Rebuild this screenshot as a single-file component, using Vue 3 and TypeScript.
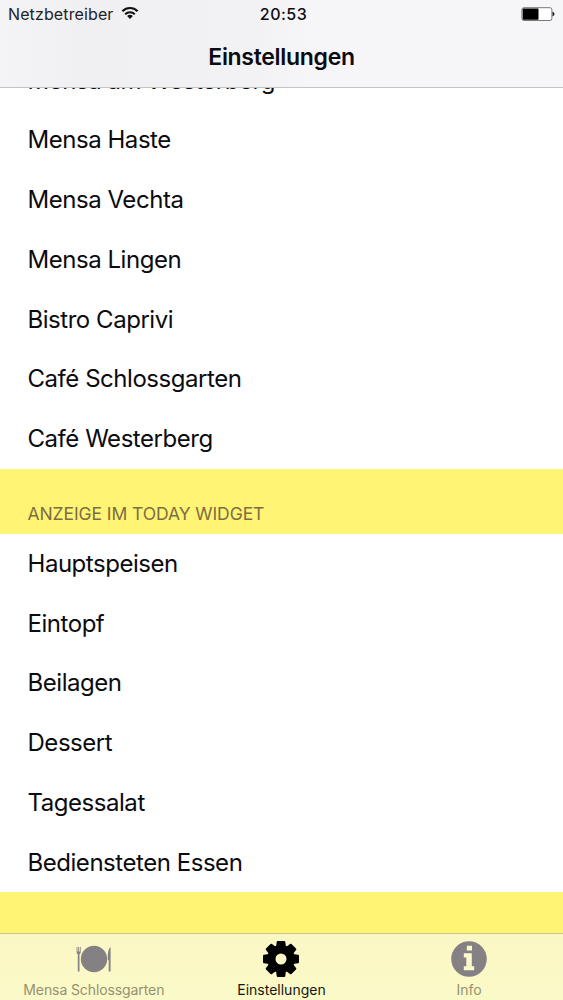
<script setup lang="ts">
const canteens: string[] = [
  'Mensa am Westerberg',
  'Mensa Haste',
  'Mensa Vechta',
  'Mensa Lingen',
  'Bistro Caprivi',
  'Café Schlossgarten',
  'Café Westerberg',
]
const categories: string[] = [
  'Hauptspeisen',
  'Eintopf',
  'Beilagen',
  'Dessert',
  'Tagessalat',
  'Bediensteten Essen',
]
const teeth: number[] = [0, 45, 90, 135, 180, 225, 270, 315]
</script>

<template>
  <div class="screen">
    <header class="top">
      <div class="status">
        <div class="carrier">
          <span>Netzbetreiber</span>
          <svg class="wifi" viewBox="0 0 18 14" width="18" height="14">
            <g fill="none" stroke="#111" stroke-width="2.1">
              <path d="M1.4 5.2a10.8 10.8 0 0 1 15.2 0" />
              <path d="M4.2 8.2a6.8 6.8 0 0 1 9.6 0" />
            </g>
            <path d="M9 13L6.1 10.1a4.1 4.1 0 0 1 5.8 0z" fill="#111" />
          </svg>
        </div>
        <div class="clock">20:53</div>
        <svg class="battery" viewBox="0 0 34 14" width="34" height="14">
          <rect x=".9" y=".7" width="30" height="12.8" rx="2" fill="#fff" stroke="#77777a" />
          <rect x="1.7" y="1.5" width="15.8" height="11.2" rx=".6" fill="#000" />
          <path d="M31.5 4.8q2 .4 2 2.2t-2 2.2z" fill="#222" />
        </svg>
      </div>
      <h1 class="title">Einstellungen</h1>
    </header>

    <main class="content">
      <ul class="list first">
        <li v-for="name in canteens" :key="name" class="row">{{ name }}</li>
      </ul>
      <h2 class="section">ANZEIGE IM TODAY WIDGET</h2>
      <ul class="list">
        <li v-for="name in categories" :key="name" class="row">{{ name }}</li>
      </ul>
    </main>

    <nav class="tabs">
      <div class="tab">
        <svg viewBox="0 0 36 38" width="36" height="38">
          <g fill="#858083">
            <circle cx="18" cy="19" r="13.2" />
            <path d="M.6 7h.8v4.500h.8V7h.9v4.500h.8V7h.8v5.200q0 1.600-1.200 2.100V31.500H1.800V14.300Q.6 13.800.6 12.200z" />
            <path d="M34.600 7V31.500h-1.900V20.500q-1-.5-1-2.500 0-9 2.900-11z" />
          </g>
        </svg>
        <span class="label mensa">Mensa Schlossgarten</span>
      </div>
      <div class="tab active">
        <svg viewBox="-19 -19 38 38" width="38" height="38">
          <path
            v-for="angle in teeth"
            :key="angle"
            d="M-5.200-10L-4.300-17q.1-1 1.100-1h6.400q1 0 1.100 1L5.200-10z"
            :transform="`rotate(${angle})`"
          />
          <circle r="9.700" fill="none" stroke="#000" stroke-width="8.400" />
        </svg>
        <span class="label">Einstellungen</span>
      </div>
      <div class="tab">
        <svg class="info" viewBox="0 0 38 38" width="38" height="38">
          <circle cx="19" cy="19" r="17.800" fill="#858083" />
          <path d="M16.800 5.800h5.200v4.800h-5.200zM13.800 13.300h8v12.900h2.400v4H13.800v-4h2.500v-8.800h-2.500z" fill="#fbf9c9" />
        </svg>
        <span class="label">Info</span>
      </div>
    </nav>
  </div>
</template>

<style>
body {
  margin: 0;
}
</style>

<style scoped>
.screen {
  width: 563px;
  height: 1000px;
  display: flex;
  flex-direction: column;
  overflow: hidden;
  background: #fff474;
  color: #0b0b10;
  font-family: Inter, "Liberation Sans", sans-serif;
}
.top {
  box-sizing: border-box;
  height: 87.5px;
  flex: none;
  border-bottom: 1px solid #c4c3c6;
  background: linear-gradient(90deg, #f4f3f6 0, #f0eff2 15%, #f2f1f4 45%, #f6f5f8 55%, #f6f5f8 100%);
}
.status {
  display: grid;
  grid-template-columns: 1fr auto 1fr;
  align-items: center;
  height: 28px;
  padding: 0 8px;
}
.carrier {
  display: flex;
  align-items: center;
  gap: 8px;
  font-size: 16px;
  letter-spacing: 0.12px;
  color: #222226;
}
.wifi {
  margin-top: -3px;
}
.clock {
  padding-left: 4px;
  font-size: 16px;
  font-weight: 500;
  letter-spacing: 0.5px;
}
.battery {
  justify-self: end;
}
.title {
  margin: 0;
  text-align: center;
  font-size: 23px;
  font-weight: 600;
  line-height: 58px;
  letter-spacing: -0.3px;
}
.content {
  flex: 1;
  min-height: 0;
  overflow: hidden;
}
.list {
  list-style: none;
  margin: 0;
  padding: 0;
  background: #fff;
}
.first {
  margin-top: -37px;
}
.row {
  height: 59.75px;
  line-height: 59.75px;
  padding-left: 27.5px;
  font-size: 24px;
  letter-spacing: -0.46px;
}
.section {
  box-sizing: border-box;
  margin: 0;
  height: 65px;
  padding: 33.5px 0 0 27.5px;
  font-size: 17.5px;
  font-weight: 400;
  line-height: 24px;
  letter-spacing: -0.08px;
  color: #7d6d42;
}
.tabs {
  box-sizing: border-box;
  flex: none;
  height: 67px;
  display: grid;
  grid-template-columns: repeat(3, 1fr);
  border-top: 1px solid #c9c58d;
  background: linear-gradient(#fbf7c4, #fafac8);
}
.tab {
  display: flex;
  flex-direction: column;
  align-items: center;
  padding-top: 6px;
  color: #96916e;
}
.tab svg {
  display: block;
  flex: none;
}
.active {
  color: #17170f;
}
.label {
  margin-top: 3px;
  font-size: 14px;
  line-height: 18px;
  white-space: nowrap;
}
.mensa {
  letter-spacing: -0.1px;
}
.info {
  margin-left: -1px;
}
</style>
